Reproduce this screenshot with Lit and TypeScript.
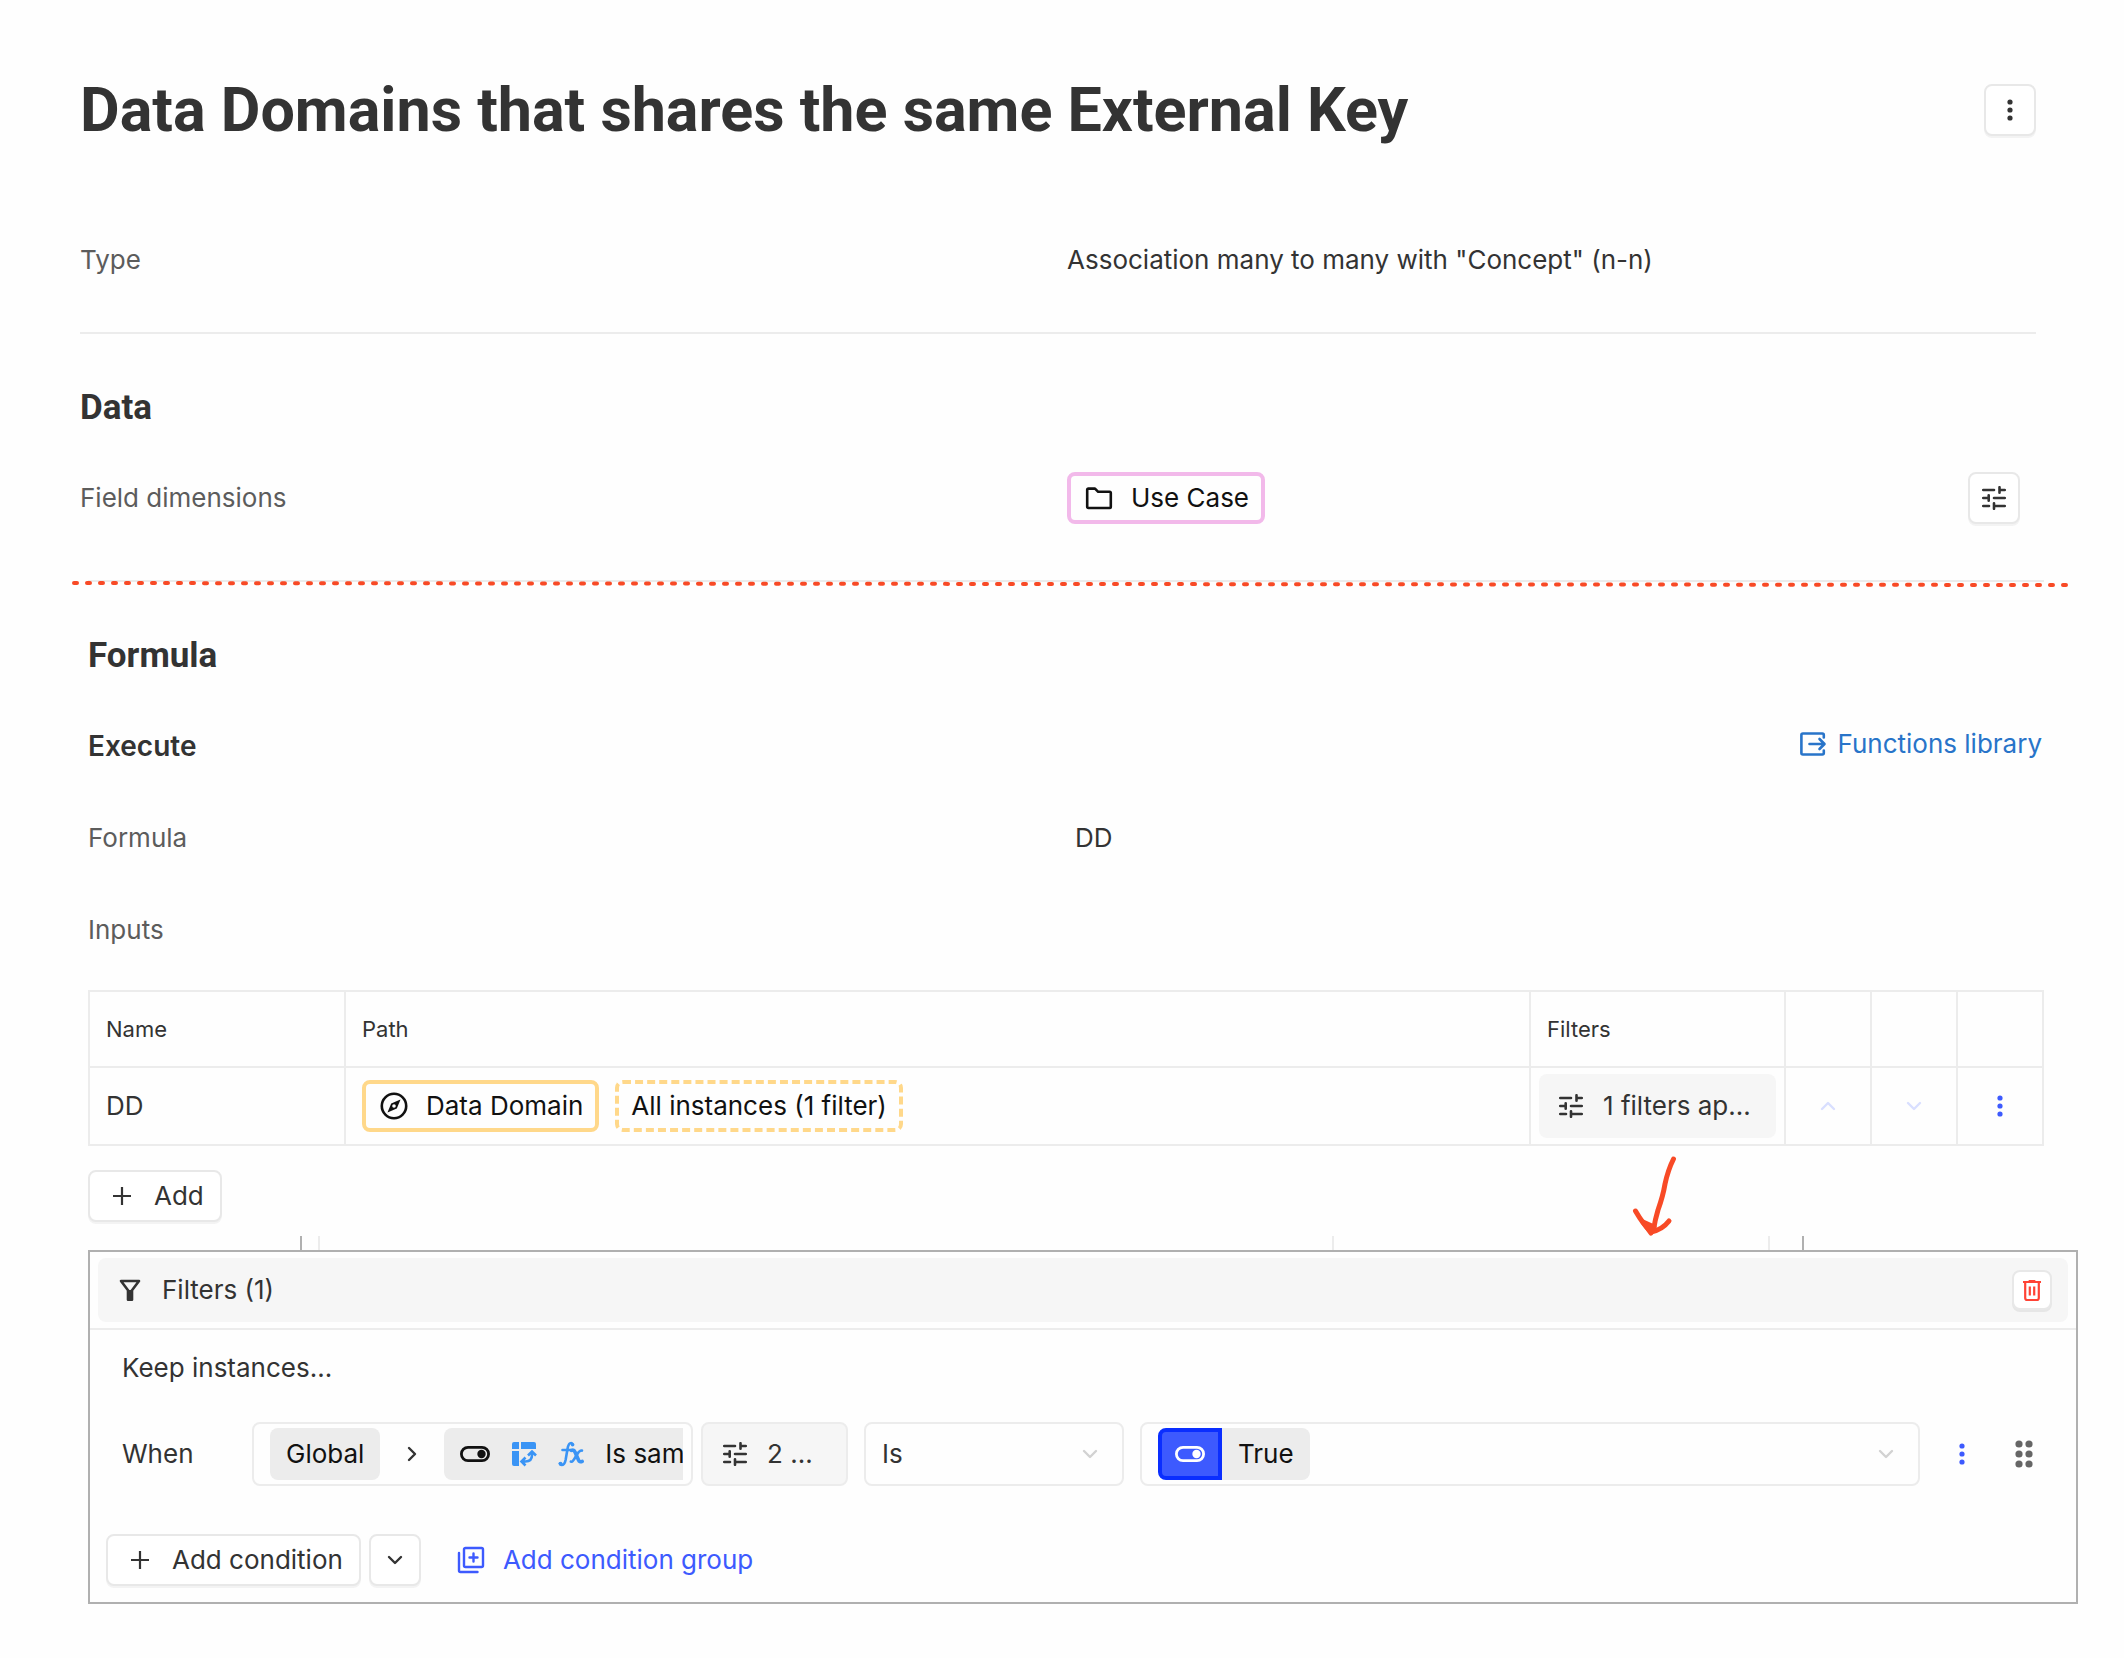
import { LitElement, html, css, svg, nothing } from "lit";
import { customElement, property } from "lit/decorators.js";

interface Glyph {
  w: number;
  h: number;
  body: unknown;
}

const glyphs: Record<string, Glyph> = {
  kebab: {
    w: 24,
    h: 24,
    body: svg`<g fill="currentColor"><circle cx="12" cy="4" r="2.6"/><circle cx="12" cy="12" r="2.6"/><circle cx="12" cy="20" r="2.6"/></g>`,
  },
  tune: {
    w: 24,
    h: 24,
    body: svg`<path d="M1.2 4H12M17.5 1.2V6.8M17.5 4H22.8M1.2 12H6.7M6.7 9.2V14.8M12 12H22.8M1.2 20H7M12 17.2V22.8M12 20H22.8" fill="none" stroke="currentColor" stroke-width="2.6" stroke-linecap="round"/>`,
  },
  folder: {
    w: 28,
    h: 24,
    body: svg`<path d="M2.2 3.8q0-1.2 1.2-1.2H10l3.2 3.2H24.6q1.2 0 1.2 1.2V20.8q0 1.2-1.2 1.2H3.4q-1.2 0-1.2-1.2Z" fill="none" stroke="currentColor" stroke-width="2.6" stroke-linejoin="round"/>`,
  },
  exit: {
    w: 28,
    h: 28,
    body: svg`<path d="M24.800 7.500V5q0-1.500-1.500-1.500H3.900Q2.400 3.500 2.400 5V23q0 1.500 1.500 1.500H23.300q1.500 0 1.500-1.500V20.500M10.500 14H25M20.500 9L25.500 14L20.500 19" fill="none" stroke="currentColor" stroke-width="2.600" stroke-linecap="round" stroke-linejoin="round"/>`,
  },
  compass: {
    w: 28,
    h: 28,
    body: svg`<circle cx="14" cy="14" r="12.2" fill="none" stroke="currentColor" stroke-width="2.6"/><path d="M20.500 7.500L16.800 16.400L7.500 20.500L11.200 11.600Z" fill="currentColor"/><circle cx="14" cy="14" r="1.800" fill="#fff"/>`,
  },
  up: {
    w: 16,
    h: 12,
    body: svg`<path d="M2 9L8 3L14 9" fill="none" stroke="currentColor" stroke-width="2.400" stroke-linecap="round" stroke-linejoin="round"/>`,
  },
  down: {
    w: 16,
    h: 12,
    body: svg`<path d="M2 3L8 9L14 3" fill="none" stroke="currentColor" stroke-width="2.400" stroke-linecap="round" stroke-linejoin="round"/>`,
  },
  right: {
    w: 12,
    h: 16,
    body: svg`<path d="M3 2L9 8L3 14" fill="none" stroke="currentColor" stroke-width="2.400" stroke-linecap="round" stroke-linejoin="round"/>`,
  },
  plus: {
    w: 20,
    h: 20,
    body: svg`<path d="M10 1V19M1 10H19" stroke="currentColor" stroke-width="2.200"/>`,
  },
  funnel: {
    w: 22,
    h: 24,
    body: svg`<path d="M2 3H20L13 12.200V21.800H9V12.200Z" fill="none" stroke="currentColor" stroke-width="2.600" stroke-linejoin="round"/><path d="M9 12H13V21H9Z" fill="currentColor"/>`,
  },
  trash: {
    w: 20,
    h: 24,
    body: svg`<path d="M1 4H19M3.200 4.500V20q0 2 2 2H14.800q2 0 2-2V4.500M7.800 8.500V17.500M12.200 8.500V17.500" fill="none" stroke="currentColor" stroke-width="2.200"/><path d="M6 3.500L7 2H13L14 3.500Z" fill="currentColor"/>`,
  },
  toggle: {
    w: 30,
    h: 16,
    body: svg`<rect x="1.400" y="1.400" width="27.200" height="13.200" rx="6.600" fill="none" stroke="currentColor" stroke-width="2.800"/><circle cx="21.500" cy="8" r="4.200" fill="currentColor"/>`,
  },
  pivot: {
    w: 26,
    h: 26,
    body: svg`<path d="M1 3Q1 1 3 1H8V8H1ZM10 1H23Q25 1 25 3V8H10ZM1 10H8V25H3Q1 25 1 23Z" fill="currentColor"/><path d="M21 11.500V14Q21 20.500 14.500 20.500H12M17 14.500L21 10.500L25 14.500M14.500 16.500L10.500 20.500L14.500 24.500" fill="none" stroke="currentColor" stroke-width="2.600"/>`,
  },
  func: {
    w: 26,
    h: 26,
    body: svg`<g fill="none" stroke="currentColor" stroke-width="2.600" stroke-linecap="round"><path d="M14.800 3.400Q13.800 1.600 12 2.400Q10.300 3.200 9.500 8L7.600 19Q6.600 24 3.600 24Q2.200 24 1.800 22.600"/><path d="M4.500 9H13"/><path d="M13.500 9.400Q16 8.600 17 11L20.500 19Q21.600 21.600 24.200 20.400" stroke-width="3.600"/><path d="M24 9.600Q21.500 9.200 19 13.500Q16.500 18 14.800 20Q14 21 12.800 20.600"/></g><circle cx="14.600" cy="3.800" r="1.800" fill="currentColor"/><circle cx="2.600" cy="22.600" r="1.900" fill="currentColor"/>`,
  },
  group: {
    w: 28,
    h: 28,
    body: svg`<g fill="none" stroke="currentColor" stroke-width="2.400" stroke-linecap="round"><rect x="7" y="2" width="19" height="19" rx="1.500"/><path d="M2 7V24.500Q2 26 3.500 26H20.500M16.500 7.500V15.500M12.500 11.500H20.500"/></g>`,
  },
  grip: {
    w: 20,
    h: 28,
    body: svg`<g fill="currentColor"><circle cx="5" cy="4" r="3.600"/><circle cx="15" cy="4" r="3.600"/><circle cx="5" cy="14" r="3.600"/><circle cx="15" cy="14" r="3.600"/><circle cx="5" cy="24" r="3.600"/><circle cx="15" cy="24" r="3.600"/></g>`,
  },
};

@customElement("ui-icon")
export class UiIcon extends LitElement {
  @property() name = "";

  static styles = css`
    :host {
      display: inline-flex;
      flex: none;
    }
    svg {
      display: block;
    }
  `;

  render() {
    const g = glyphs[this.name];
    if (!g) return nothing;
    return html`<svg width=${g.w} height=${g.h} viewBox="0 0 ${g.w} ${g.h}" aria-hidden="true">${g.body}</svg>`;
  }
}

@customElement("app-root")
export class AppRoot extends LitElement {
  static styles = css`
    :host {
      display: block;
      min-height: 100vh;
      box-sizing: border-box;
      background: #fefefe;
      color: #333;
      font: 26px/36px Inter, "Liberation Sans", sans-serif;
    }
    * {
      box-sizing: border-box;
    }
    h1,
    h2,
    h3,
    p {
      margin: 0;
    }
    button,
    select {
      font: inherit;
      color: inherit;
      margin: 0;
      padding: 0;
      border: 0;
      background: none;
      appearance: none;
      cursor: pointer;
    }
    .page {
      padding: 84px 0 54px;
    }
    .summary {
      margin: 0 88px 0 80px;
    }
    .formula {
      margin: 0 80px 0 88px;
    }
    .row {
      display: grid;
      grid-template-columns: 987px 1fr auto;
      align-items: center;
      min-height: 52px;
    }
    .label {
      color: #5c5c5c;
    }
    .title-row {
      display: flex;
      align-items: center;
      justify-content: space-between;
      height: 52px;
      margin-bottom: 98px;
    }
    h1,
    h2 {
      font-family: Roboto, "Liberation Sans", sans-serif;
      font-weight: 700;
    }
    h1 {
      font-size: 61px;
      line-height: 72px;
    }
    h2 {
      font-size: 35px;
      line-height: 40px;
      margin: 54px 0 44px;
    }
    h3 {
      font-size: 28px;
      font-weight: 600;
    }
    .btn {
      display: inline-flex;
      align-items: center;
      justify-content: center;
      height: 52px;
      border: 2px solid #e8e8e8;
      border-radius: 8px;
      background: #fff;
      box-shadow: 0 2px 0 #f3f3f3;
    }
    .square {
      width: 52px;
    }
    .labelled {
      gap: 22px;
      padding: 0 16px 0 22px;
    }
    .rule {
      height: 2px;
      background: #ececec;
    }
    .type-rule {
      margin-top: 46px;
    }
    .tuned {
      margin-right: 16px;
    }
    .chip {
      display: inline-flex;
      align-items: center;
      height: 52px;
      padding: 0 12px 0 14px;
      border: 4px solid;
      border-radius: 8px;
    }
    .chip-text {
      color: #111;
    }
    .chip ui-icon {
      color: #111;
      margin: 0 18px 0 0;
    }
    .pink {
      border-color: #f2b9ea;
    }
    .amber {
      border-color: #ffd88a;
    }
    .dashed {
      border-style: dashed;
      padding: 0 12px;
    }
    .section-end {
      position: relative;
      margin: 56px 80px 0 88px;
    }
    .dotted {
      position: absolute;
      left: -16px;
      top: -2px;
      width: calc(100% + 40px);
      height: 12px;
    }
    .execute {
      display: flex;
      align-items: center;
      justify-content: space-between;
      height: 52px;
      padding-right: 2px;
      margin-bottom: 40px;
    }
    .library {
      display: inline-flex;
      align-items: center;
      gap: 10px;
      height: 40px;
      align-self: flex-start;
      padding-top: 8px;
      color: #2874c9;
      text-decoration: none;
    }
    .inputs {
      margin: 40px 0 34px;
    }
    table {
      width: 100%;
      table-layout: fixed;
      border-collapse: collapse;
    }
    th,
    td {
      border: 2px solid #ececec;
      padding: 0 16px;
      text-align: left;
    }
    th {
      height: 76px;
      font-size: 22px;
      font-weight: 400;
    }
    td {
      height: 78px;
    }
    .c-name {
      width: 256px;
    }
    .c-filters {
      width: 255px;
    }
    .c-tool {
      width: 86px;
    }
    .path {
      display: flex;
      gap: 16px;
    }
    .filter-cell {
      padding: 0 8px;
    }
    .applied {
      display: flex;
      align-items: center;
      gap: 20px;
      width: 100%;
      height: 64px;
      padding: 0 20px;
      border-radius: 8px;
      background: #f6f6f6;
    }
    .tool-cell {
      padding: 0;
    }
    .tool {
      display: flex;
      align-items: center;
      justify-content: center;
      width: 100%;
      height: 52px;
    }
    .faint {
      color: #d9dfff;
    }
    .blue {
      color: #3d5afe;
    }
    .add-row {
      position: relative;
      margin: 24px 0 14px;
      display: flex;
    }
    .arrow {
      position: absolute;
      right: 364px;
      top: -16px;
      width: 50px;
      height: 86px;
    }
    .ticks {
      display: grid;
      grid-template-columns: 212px 18px 1fr 436px 34px 242px;
      height: 14px;
    }
    .tick {
      border-left: 2px solid #ececec;
    }
    .tick-dark {
      border-color: #b0b0b0;
    }
    .panel {
      margin: 0 46px 0 88px;
      border: 2px solid #b0b0b0;
      padding-bottom: 16px;
    }
    .panel-head {
      padding: 6px 8px;
      border-bottom: 2px solid #ececec;
    }
    .bar {
      display: flex;
      align-items: center;
      gap: 21px;
      height: 64px;
      padding: 0 16px 0 21px;
      border-radius: 8px;
      background: #f6f6f6;
    }
    .grow {
      flex: 1;
    }
    .trash {
      width: 40px;
      height: 40px;
      color: #ff4335;
      box-shadow: 0 2px 0 #e6e6e6;
    }
    .keep {
      padding: 20px 32px 36px;
    }
    .when {
      display: grid;
      grid-template-columns: 130px 441px 147px 260px 1fr auto;
      align-items: center;
      padding: 0 42px 0 32px;
      margin-bottom: 48px;
    }
    .box {
      display: flex;
      align-items: center;
      height: 64px;
      border: 2px solid #ececec;
      border-radius: 8px;
      min-width: 0;
    }
    .scope {
      padding: 0 8px 0 16px;
    }
    .scope-view {
      display: flex;
      align-items: center;
      overflow: hidden;
      flex: 1;
    }
    .tag {
      display: inline-flex;
      align-items: center;
      flex: none;
      height: 52px;
      padding: 0 16px;
      border-radius: 8px;
      background: #ececec;
      color: #111;
      white-space: nowrap;
    }
    .tag-icons {
      gap: 21px;
    }
    .sep {
      display: flex;
      justify-content: center;
      flex: none;
      width: 64px;
    }
    .sky {
      color: #3a94f5;
    }
    .more {
      gap: 20px;
      padding: 0 20px;
      margin-left: 8px;
      background: #f6f6f6;
      width: 147px;
    }
    .operator {
      margin-left: 24px;
      width: 260px;
      padding: 0 24px 0 16px;
    }
    .value {
      margin: 0 0 0 40px;
      padding: 0 24px 0 16px;
    }
    .operator-select {
      flex: 1;
      height: 52px;
      min-width: 0;
    }
    .caret {
      display: flex;
      color: #d2d2d2;
      pointer-events: none;
    }
    .value-icon {
      display: flex;
      align-items: center;
      justify-content: center;
      width: 64px;
      height: 52px;
      border: 4px solid #0a2eff;
      border-radius: 8px 0 0 8px;
      background: #3d5afe;
      color: #fff;
    }
    .value-select {
      height: 52px;
      padding: 0 16px;
      background: #ececec;
      color: #111;
      border-radius: 0 8px 8px 0;
    }
    .row-tools {
      display: flex;
      align-items: center;
      gap: 40px;
      padding-left: 30px;
    }
    .row-tool {
      display: flex;
    }
    .grip {
      color: #666;
    }
    .actions {
      display: flex;
      align-items: center;
      padding-left: 16px;
      gap: 8px;
    }
    .link {
      display: inline-flex;
      align-items: center;
      gap: 18px;
      height: 52px;
      margin-left: 28px;
    }
  `;

  render() {
    return html`
      <main class="page">
        <section class="summary">
          <header class="title-row">
            <h1>Data Domains that shares the same External Key</h1>
            <button class="btn square" aria-label="More actions"><ui-icon name="kebab"></ui-icon></button>
          </header>
          <div class="row">
            <span class="label">Type</span>
            <span>Association many to many with "Concept" (n-n)</span>
          </div>
          <div class="rule type-rule"></div>
          <h2>Data</h2>
          <div class="row">
            <span class="label">Field dimensions</span>
            <span class="path">
              <span class="chip pink"><ui-icon name="folder"></ui-icon><span class="chip-text">Use Case</span></span>
            </span>
            <button class="btn square tuned" aria-label="Field settings"><ui-icon name="tune"></ui-icon></button>
          </div>
        </section>

        <div class="rule section-end">
          <svg class="dotted" aria-hidden="true">
            <line x1="2" y1="5" x2="100%" y2="7" stroke="#f84a26" stroke-width="4" stroke-linecap="round" stroke-dasharray="3 10" />
          </svg>
        </div>

        <section class="formula">
          <h2>Formula</h2>
          <div class="execute">
            <h3>Execute</h3>
            <a class="library" href="#functions"><ui-icon name="exit"></ui-icon>Functions library</a>
          </div>
          <div class="row">
            <span class="label">Formula</span>
            <span>DD</span>
          </div>
          <div class="row inputs"><span class="label">Inputs</span></div>
          <table>
            <colgroup>
              <col class="c-name" />
              <col />
              <col class="c-filters" />
              <col class="c-tool" />
              <col class="c-tool" />
              <col class="c-tool" />
            </colgroup>
            <thead>
              <tr>
                <th>Name</th>
                <th>Path</th>
                <th>Filters</th>
                <th></th>
                <th></th>
                <th></th>
              </tr>
            </thead>
            <tbody>
              <tr>
                <td>DD</td>
                <td>
                  <div class="path">
                    <span class="chip amber"><ui-icon name="compass"></ui-icon><span class="chip-text">Data Domain</span></span>
                    <span class="chip amber dashed"><span class="chip-text">All instances (1 filter)</span></span>
                  </div>
                </td>
                <td class="filter-cell">
                  <button class="applied"><ui-icon name="tune"></ui-icon>1 filters ap...</button>
                </td>
                <td class="tool-cell"><button class="tool faint" aria-label="Move up"><ui-icon name="up"></ui-icon></button></td>
                <td class="tool-cell"><button class="tool faint" aria-label="Move down"><ui-icon name="down"></ui-icon></button></td>
                <td class="tool-cell"><button class="tool blue" aria-label="Input actions"><ui-icon name="kebab"></ui-icon></button></td>
              </tr>
            </tbody>
          </table>
          <div class="add-row">
            <button class="btn labelled"><ui-icon name="plus"></ui-icon>Add</button>
            <svg class="arrow" viewBox="0 0 50 86" aria-hidden="true">
              <g fill="none" stroke="#f84a26" stroke-width="5" stroke-linecap="round" stroke-linejoin="round">
                <path d="M43.500 5Q38 16 35 30Q33 42 28 56Q25 66 23.500 76" />
                <path d="M5.500 57Q13 70 21 78Q32 76 39 67" />
                <path d="M13 68L21 79L24 73Z" fill="#f84a26" />
              </g>
            </svg>
          </div>
          <div class="ticks" aria-hidden="true">
            <span></span>
            <span class="tick tick-dark"></span>
            <span class="tick"></span>
            <span class="tick"></span>
            <span class="tick"></span>
            <span class="tick tick-dark"></span>
          </div>
        </section>

        <section class="panel">
          <div class="panel-head">
            <div class="bar">
              <ui-icon name="funnel"></ui-icon>
              <span class="grow">Filters (1)</span>
              <button class="btn trash" aria-label="Delete filters"><ui-icon name="trash"></ui-icon></button>
            </div>
          </div>
          <p class="keep">Keep instances...</p>
          <div class="when">
            <span>When</span>
            <div class="box scope">
              <div class="scope-view">
                <span class="tag">Global</span>
                <span class="sep"><ui-icon name="right"></ui-icon></span>
                <span class="tag tag-icons">
                  <ui-icon name="toggle"></ui-icon>
                  <ui-icon class="sky" name="pivot"></ui-icon>
                  <ui-icon class="sky" name="func"></ui-icon>
                  Is sam
                </span>
              </div>
            </div>
            <button class="box more"><ui-icon name="tune"></ui-icon>2 ...</button>
            <label class="box operator">
              <select class="operator-select" aria-label="Operator">
                <option>Is</option>
              </select>
              <span class="caret"><ui-icon name="down"></ui-icon></span>
            </label>
            <label class="box value">
              <span class="value-icon"><ui-icon name="toggle"></ui-icon></span>
              <select class="value-select" aria-label="Value">
                <option>True</option>
              </select>
              <span class="grow"></span>
              <span class="caret"><ui-icon name="down"></ui-icon></span>
            </label>
            <div class="row-tools">
              <button class="row-tool blue" aria-label="Condition actions"><ui-icon name="kebab"></ui-icon></button>
              <button class="row-tool grip" aria-label="Reorder condition"><ui-icon name="grip"></ui-icon></button>
            </div>
          </div>
          <div class="actions">
            <button class="btn labelled"><ui-icon name="plus"></ui-icon>Add condition</button>
            <button class="btn square" aria-label="More condition types"><ui-icon name="down"></ui-icon></button>
            <button class="link blue"><ui-icon name="group"></ui-icon>Add condition group</button>
          </div>
        </section>
      </main>
    `;
  }
}
